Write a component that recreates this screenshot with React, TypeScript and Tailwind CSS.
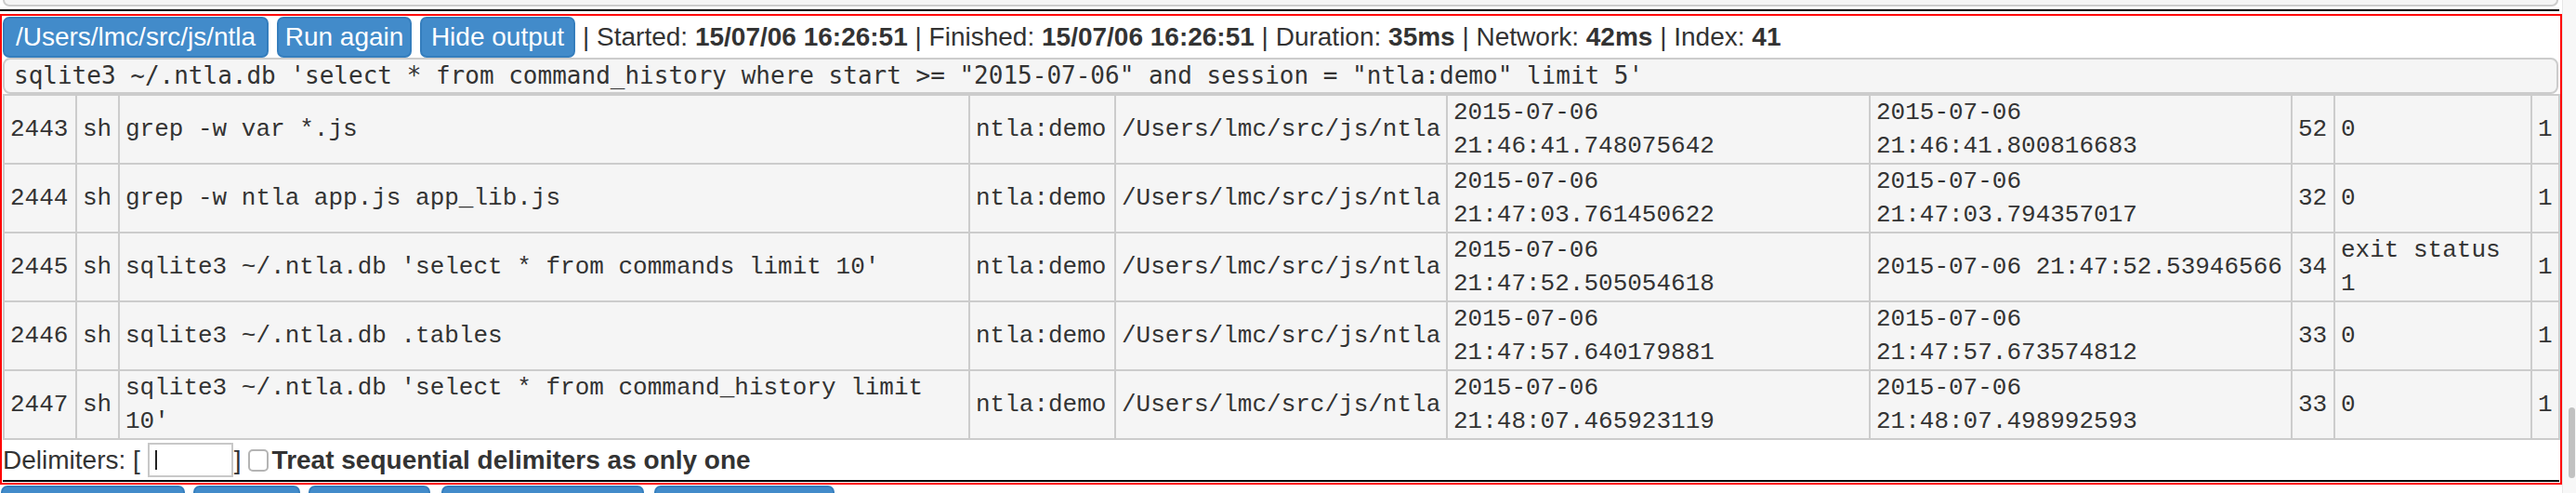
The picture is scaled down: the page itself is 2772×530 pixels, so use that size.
const rows = [
	{
		id: '2443',
		cmd: 'grep -w var *.js',
		start: '2015-07-06 21:46:41.748075642',
		end: '2015-07-06 21:46:41.800816683',
		dur: '52',
		exit: '0',
	},
	{
		id: '2444',
		cmd: 'grep -w ntla app.js app_lib.js',
		start: '2015-07-06 21:47:03.761450622',
		end: '2015-07-06 21:47:03.794357017',
		dur: '32',
		exit: '0',
	},
	{
		id: '2445',
		cmd: "sqlite3 ~/.ntla.db 'select * from commands limit 10'",
		start: '2015-07-06 21:47:52.505054618',
		end: '2015-07-06 21:47:52.53946566',
		dur: '34',
		exit: 'exit status 1',
	},
	{
		id: '2446',
		cmd: 'sqlite3 ~/.ntla.db .tables',
		start: '2015-07-06 21:47:57.640179881',
		end: '2015-07-06 21:47:57.673574812',
		dur: '33',
		exit: '0',
	},
	{
		id: '2447',
		cmd: "sqlite3 ~/.ntla.db 'select * from command_history limit 10'",
		start: '2015-07-06 21:48:07.465923119',
		end: '2015-07-06 21:48:07.498992593',
		dur: '33',
		exit: '0',
	},
];

const td = 'border-2 border-[#ccc] px-[6px] py-0 align-middle';

function Btn({ label, width }: { label: string; width: string }) {
	return (
		<div
			className={`${width} h-[44px] shrink-0 rounded-[7px] border-2 border-[#357ebd] bg-[#428bca] text-center leading-[40px] text-white whitespace-nowrap`}
		>
			{label}
		</div>
	);
}

function HistoryTable() {
	return (
		<table className="w-[2750px] table-fixed border-collapse bg-[#f5f5f5] font-['Liberation_Mono',monospace] text-[26px] leading-[36px] text-[#333]">
			<colgroup>
				<col className="w-[78px]" />
				<col className="w-[46px]" />
				<col className="w-[915px]" />
				<col className="w-[157px]" />
				<col className="w-[357px]" />
				<col className="w-[455px]" />
				<col className="w-[454px]" />
				<col className="w-[46px]" />
				<col className="w-[212px]" />
				<col className="w-[30px]" />
			</colgroup>
			<tbody>
				{rows.map((r) => (
					<tr key={r.id}>
						<td className={td}>{r.id}</td>
						<td className={td}>sh</td>
						<td className={td}>{r.cmd}</td>
						<td className={td}>ntla:demo</td>
						<td className={td}>/Users/lmc/src/js/ntla</td>
						<td className={td}>{r.start}</td>
						<td className={td}>{r.end}</td>
						<td className={td}>{r.dur}</td>
						<td className={td}>{r.exit}</td>
						<td className={td}>1</td>
					</tr>
				))}
			</tbody>
		</table>
	);
}

export default function App() {
	return (
		<div className="flex h-[530px] w-[2772px] overflow-hidden bg-white font-['Liberation_Sans',Arial,sans-serif] text-[28px] text-[#333]">
			<div className="w-[2757px] shrink-0">
				{/* tail of the previous block */}
				<div className="ml-[3px] h-[7px] w-[2750px] rounded-b-[8px] border-2 border-t-0 border-[#ccc] bg-[#f5f5f5]" />
				<div className="mt-[3px] h-[2px] w-[2754px] bg-black" />

				<div className="mt-[3px] w-[2757px] border-2 border-[#ff0000] p-px">
					<div className="flex h-[44px] items-center">
						<div className="flex gap-[9px]">
							<Btn label="/Users/lmc/src/js/ntla" width="w-[286px]" />
							<Btn label="Run again" width="w-[145px]" />
							<Btn label="Hide output" width="w-[167px]" />
						</div>
						<span className="ml-[8px] leading-[32px] whitespace-pre">
							| Started: <b>15/07/06 16:26:51</b> | Finished: <b>15/07/06 16:26:51</b> | Duration:{' '}
							<b>35ms</b> | Network: <b>42ms</b> | Index: <b>41</b>
						</span>
					</div>

					<div className="h-[39px] w-[2750px] rounded-[8px] border-2 border-[#ccc] bg-[#f5f5f5] px-[10px] font-['DejaVu_Sans_Mono',monospace] text-[26px] leading-[35px] whitespace-pre">
						sqlite3 ~/.ntla.db 'select * from command_history where start &gt;= "2015-07-06" and session = "ntla:demo" limit 5'
					</div>

					<HistoryTable />

					<div className="flex h-[43px] items-center leading-[32px]">
						<span className="whitespace-pre">Delimiters: [</span>
						<div className="ml-[8px] flex h-[37px] w-[92px] items-center border-2 border-[#c8c8c8] bg-white pl-[6px]">
							<div className="h-[21px] w-[2px] bg-[#222]" />
						</div>
						<span className="ml-[1px]">]</span>
						<div className="ml-[7px] h-[24px] w-[22px] rounded-[5px] border-2 border-[#b4b4b4] bg-white" />
						<span className="ml-[4px] font-bold">Treat sequential delimiters as only one</span>
					</div>
					<div className="h-[2px] w-full bg-black" />
				</div>

				{/* next block, cut off by the window */}
				<div className="mt-px flex pl-px">
					<div className="h-[44px] w-[198px] rounded-[7px] border-2 border-[#357ebd] bg-[#428bca]" />
					<div className="ml-[9px] h-[44px] w-[115px] rounded-[7px] border-2 border-[#357ebd] bg-[#428bca]" />
					<div className="ml-[9px] h-[44px] w-[131px] rounded-[7px] border-2 border-[#357ebd] bg-[#428bca]" />
					<div className="ml-[12px] h-[44px] w-[218px] rounded-[7px] border-2 border-[#357ebd] bg-[#428bca]" />
					<div className="ml-[11px] h-[44px] w-[194px] rounded-[7px] border-2 border-[#357ebd] bg-[#428bca]" />
				</div>
			</div>

			{/* page scrollbar */}
			<div className="w-[15px] shrink-0 border-l border-[#e6e6e6] bg-[#f7f7f7] pt-[438px] pl-[6px]">
				<div className="h-[76px] w-[7px] rounded-full bg-[#c1c1c1]" />
			</div>
		</div>
	);
}
